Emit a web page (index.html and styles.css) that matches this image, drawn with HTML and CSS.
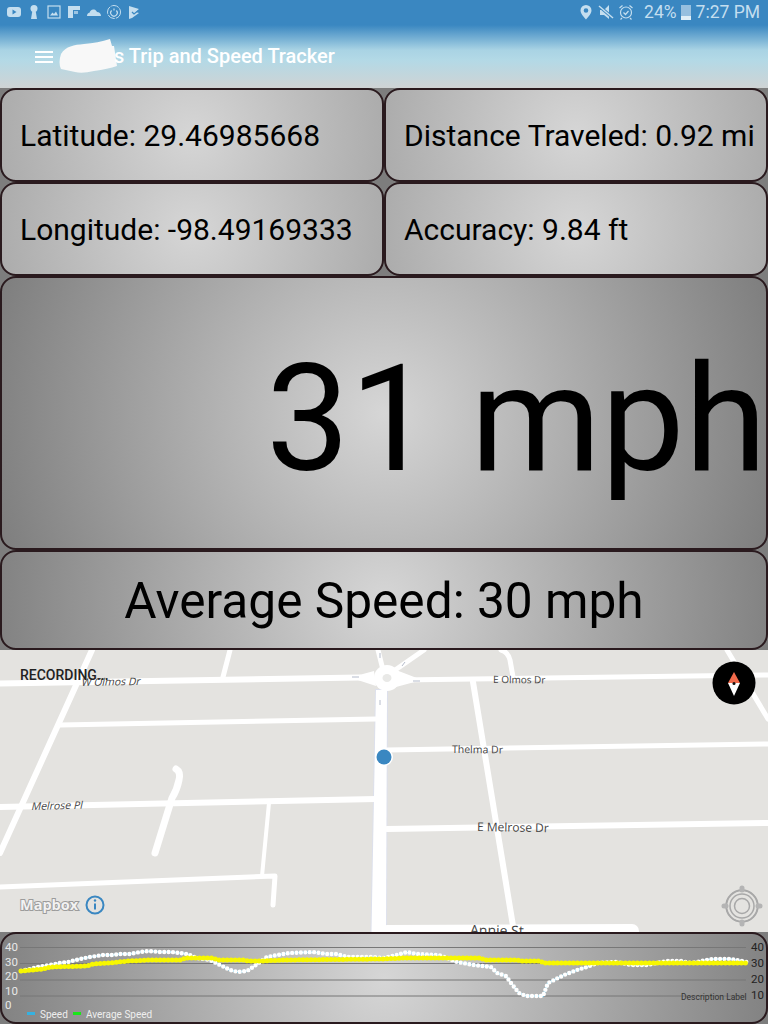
FILE: index.html
```html
<!DOCTYPE html>
<html lang="en">
<head>
  <meta charset="UTF-8" />
  <meta name="viewport" content="width=device-width, initial-scale=1" />
  <title>Trip and Speed Tracker</title>
  <link rel="stylesheet" href="styles.css">
</head>
<body>
  <header class="top">
    <div class="status-bar">
      <div class="status-icons">
        <svg viewBox="0 0 16 16"><rect x="1" y="3" width="14" height="10" rx="3" fill="currentColor"/><path d="M6.500 5.500v5l4-2.500z" fill="#3a87c1"/></svg>
        <svg viewBox="0 0 16 16"><circle cx="8" cy="4.500" r="3.500" fill="currentColor"/><path d="M6.500 6h3l1.500 9H5z" fill="currentColor"/></svg>
        <svg viewBox="0 0 16 16"><rect x="2" y="2" width="12" height="12" fill="none" stroke="currentColor" stroke-width="1.200"/><path d="M4 11.500l2.500-3 1.500 1.500 2-2.500 2 4z" fill="currentColor"/></svg>
        <svg viewBox="0 0 16 16"><path d="M2 2h12v4H7v8H2z" fill="currentColor"/><path d="M8 7h4v3H8z" fill="currentColor" opacity=".7"/></svg>
        <svg viewBox="0 0 16 16"><path d="M1 12c0-2 1-3 2.500-3.200C4 6.500 6 5 8 5.500c1.500.3 2.500 1.300 3 2.500 2 0 4 1.500 4 4z" fill="currentColor"/></svg>
        <svg viewBox="0 0 16 16"><circle cx="8" cy="8" r="6.500" fill="none" stroke="currentColor" stroke-width="1" stroke-dasharray="8 1"/><path d="M8 4.500v2M5.600 6.500a3.300 3.300 0 1 0 4.800 0" fill="none" stroke="currentColor" stroke-width="1.200"/></svg>
        <svg viewBox="0 0 16 16"><path d="M3 2l10 3-3 3 3 1-7 5-3 1z" fill="currentColor"/><path d="M6 8l2 2 5-4" fill="none" stroke="#3a87c1" stroke-width="1.300"/></svg>
      </div>
      <div class="status-right">
        <svg class="status-glyph" viewBox="0 0 16 16"><path fill-rule="evenodd" d="M8 1a5.500 5.500 0 0 0-5.500 5.500C2.500 10 8 15.500 8 15.500S13.500 10 13.500 6.500A5.500 5.500 0 0 0 8 1zm0 3.200a2.300 2.300 0 1 1 0 4.600 2.300 2.300 0 0 1 0-4.600z" fill="currentColor"/></svg>
        <svg class="status-glyph" viewBox="0 0 16 16"><path d="M11 1v14L6 11H2V6h4z" fill="currentColor"/><path d="M1 2l14 12" stroke="#3a87c1" stroke-width="3"/><path d="M1 2l14 12" stroke="currentColor" stroke-width="1.500"/></svg>
        <svg class="status-glyph" viewBox="0 0 16 16"><circle cx="8" cy="8.500" r="5.500" fill="none" stroke="currentColor" stroke-width="1.200"/><path d="M5.500 8.500l2 2 3-3.500M1.500 4l3-2.500M14.500 4l-3-2.500M4 14l-1.500 1.500M12 14l1.500 1.500" fill="none" stroke="currentColor" stroke-width="1.200"/></svg>
        <span class="status-percent">24%</span>
        <span class="battery"></span>
        <span class="status-time">7:27 PM</span>
      </div>
    </div>
    <div class="title-bar">
      <span class="menu-icon"><i></i><i></i><i></i></span>
      <svg class="blur-patch" viewBox="0 0 62 36"><path d="M3 15C8 7 16 6 26 5Q40 4 52 0l2 7 2 0 3 20Q50 30 36 32Q24 35 17 33L3 30Q0 24 3 15z" fill="#f8f8f8"/></svg>
      <span class="title">s Trip and Speed Tracker</span>
    </div>
  </header>

  <main class="readings">
    <div class="card">Latitude: 29.46985668</div>
    <div class="card">Distance Traveled: 0.92 mi</div>
    <div class="card">Longitude: -98.49169333</div>
    <div class="card">Accuracy: 9.84 ft</div>
    <div class="card card-speed">31 mph</div>
    <div class="card card-average">Average Speed: 30 mph</div>
  </main>

  <section class="map">
    <svg class="map-canvas" viewBox="0 0 768 282">
      <!-- calles -->
      <path class="main-road-edge" d="M376 40L371.500 282H386L387 40z"/>
      <g class="roads">
        <path d="M0 33.500L360 27.500" stroke-width="6"/>
        <path d="M92 0L0 203" stroke-width="6"/>
        <path d="M230 0L223 27" stroke-width="5"/>
        <path d="M60 75L376 69" stroke-width="5"/>
        <path d="M0 157L376 149" stroke-width="6"/>
        <path d="M176 119Q181 122 179 130Q177 140 172 148L155 203" stroke-width="7"/>
        <path d="M269 153L262 226" stroke-width="4"/>
        <path d="M0 237L275 226L273 255" stroke-width="5"/>
        <path d="M378 0L385 28M424 0L388 25" stroke-width="5"/>
        <path d="M400 30L768 25" stroke-width="5"/>
        <path d="M501 0Q508 2 510 10L513 27" stroke-width="5"/>
        <path d="M727 0L768 69" stroke-width="5"/>
        <path d="M473 32L514 282" stroke-width="6"/>
        <path d="M387 100L768 94" stroke-width="5"/>
        <path d="M387 179L768 173" stroke-width="6"/>
        <path d="M387 282L632 281" stroke-width="14"/>
      </g>
      <path class="main-road" d="M376 40L371.500 282H386L387 40z"/>
      <path class="main-road" d="M350 27.500L374 21 376 36zM422 30L396 20 396 37z"/>
      <circle cx="387" cy="28" r="13" fill="#fff"/>
      <ellipse cx="387" cy="28" rx="4.500" ry="4" fill="#e9e9e7"/>
      <g class="arrows">
        <path d="M352 27h7M380 3v5M380 50v5M420 31h-7M405 12l-3 4"/>
      </g>

      <!-- nombres de calles -->
      <text class="street" transform="translate(81 36) rotate(-1) skewX(-14)">W Olmos Dr</text>
      <text class="street" transform="translate(31 160) rotate(-1.500) skewX(-14)">Melrose Pl</text>
      <text class="street street-small" transform="translate(493 33) rotate(.5)">E Olmos Dr</text>
      <text class="street" transform="translate(452 103) rotate(.5)">Thelma Dr</text>
      <text class="street street-mid" transform="translate(477 181) rotate(1)">E Melrose Dr</text>
      <text class="street street-big" transform="translate(470 285) rotate(1)">Annie St</text>

      <!-- posicion actual -->
      <circle cx="384" cy="107" r="9" fill="#fff"/>
      <circle cx="384" cy="107" r="7.500" fill="#3a87c1"/>

      <!-- logo -->
      <text class="mapbox-logo" x="20" y="260">Mapbox</text>
      <circle cx="95" cy="255" r="8.500" fill="none" stroke="#3a87c1" stroke-width="2"/>
      <path d="M95 253.500v6" stroke="#3a87c1" stroke-width="2"/>
      <circle cx="95" cy="250.500" r="1.200" fill="#3a87c1"/>

      <!-- brujula -->
      <circle cx="734" cy="33" r="21.500" fill="#000"/>
      <path d="M734 22l-6 11h12z" fill="#f26a4b"/>
      <path d="M734 46l-6-13h12z" fill="#fff"/>
      <circle cx="734" cy="33.500" r="1.500" fill="#111"/>

      <!-- boton de ubicacion -->
      <g class="locate">
        <circle cx="742" cy="256" r="16" fill="#e4e3e0"/>
        <circle cx="742" cy="256" r="15.500"/>
        <circle cx="742" cy="256" r="12"/>
        <circle cx="742" cy="256" r="7.500" fill="#f6f6f6" stroke="none"/>
        <path class="locate-ticks" d="M742 238v2M742 272v2M724 256h2M758 256h2"/>
      </g>
    </svg>
    <span class="recording">RECORDING...</span>
  </section>

  <section class="card card-chart">
    <svg class="chart" viewBox="0 0 768 92">
      <g class="grid-lines">
        <path d="M20 15.500H746M20 31.500H746M20 48H746M20 64H746"/>
      </g>
      <g class="axis-left">
        <text x="5" y="19">40</text>
        <text x="5" y="34">30</text>
        <text x="5" y="48">20</text>
        <text x="5" y="63">10</text>
        <text x="5" y="77">0</text>
      </g>
      <g class="axis-right">
        <text x="751" y="19">40</text>
        <text x="751" y="35">30</text>
        <text x="751" y="51">20</text>
        <text x="751" y="67">10</text>
      </g>
      <polyline class="line-speed" points="21,39 30,37 38,35 50,33 60,31 68,30 80,27 90,25 103,23 113,23 120,22 130,22 140,20 149,19 160,20 172,20 187,22 197,26 210,28 220,33 230,38 238,40 247,39 253,35 267,25 283,22 290,21 313,20 327,22 337,22 347,25 373,25 384,26 397,23 407,20 417,22 439,23 447,26 457,30 474,33 491,35 497,41 506,44 511,51 519,61 526,64 543,64 548,51 556,47 564,43 577,38 587,35 597,31 617,30 631,33 647,33 667,29 681,29 691,31 712,27 731,27 747,30"/>
      <polyline class="dots-speed" points="21,39 30,37 38,35 50,33 60,31 68,30 80,27 90,25 103,23 113,23 120,22 130,22 140,20 149,19 160,20 172,20 187,22 197,26 210,28 220,33 230,38 238,40 247,39 253,35 267,25 283,22 290,21 313,20 327,22 337,22 347,25 373,25 384,26 397,23 407,20 417,22 439,23 447,26 457,30 474,33 491,35 497,41 506,44 511,51 519,61 526,64 543,64 548,51 556,47 564,43 577,38 587,35 597,31 617,30 631,33 647,33 667,29 681,29 691,31 712,27 731,27 747,30"/>
      <polyline class="line-average" points="21,39 43,37 50,35 87,34 93,32 110,31 128,29 150,28 182,28 185,26 213,26 218,28 243,28 248,29 263,29 283,28 383,27 404,26 481,26 484,28 517,28 521,29 541,29 543,31 747,31"/>
      <text class="chart-note" x="681" y="68">Description Label</text>
      <rect x="27" y="80" width="8" height="3" fill="#35b1e0"/>
      <text class="chart-legend" x="40" y="86">Speed</text>
      <rect x="73" y="80" width="8" height="3" fill="#19e619"/>
      <text class="chart-legend" x="86" y="86">Average Speed</text>
    </svg>
  </section>
</body>
</html>
```

FILE: styles.css
```css
* {
  box-sizing: border-box;
}
body {
  margin: 0;
  width: 768px;
  height: 1024px;
  overflow: hidden;
  background: #7d7d7d;
  font-family: Roboto, "Liberation Sans", sans-serif;
  display: flex;
  flex-direction: column;
}

/* Barra superior */
.top {
  height: 88px;
  background: linear-gradient(#3a87c1 0, #3a87c1 25px, #a9d3e4 50px, #b3d9e6 60px, #cfd3d4 88px);
  color: #fff;
}
.status-bar {
  height: 24px;
  display: flex;
  justify-content: space-between;
  align-items: center;
  padding: 0 8px 0 6px;
  color: #c4deef;
}
.status-icons {
  display: flex;
  gap: 4px;
}
.status-icons svg {
  width: 16px;
  height: 16px;
}
.status-right {
  display: flex;
  align-items: center;
  font-size: 17.500px;
}
.status-glyph {
  width: 16px;
  height: 16px;
  margin-right: 4px;
}
.status-percent {
  margin-left: 6px;
}
.battery {
  width: 10px;
  height: 15px;
  margin: 0 5px 0 4px;
  background: linear-gradient(#96bfdf 0, #96bfdf 70%, #dfeef7 70%);
  border-top: 1px solid #96bfdf;
}
.title-bar {
  height: 64px;
  display: flex;
  align-items: center;
  padding: 0 0 0 35px;
}
.menu-icon {
  width: 18px;
  display: flex;
  flex-direction: column;
  gap: 3px;
  margin-top: 1px;
}
.menu-icon i {
  height: 2px;
  background: #fff;
}
.blur-patch {
  width: 62px;
  height: 36px;
  margin-left: 5px;
  margin-top: 1px;
}
.title {
  margin-left: -6px;
  font-size: 20px;
  font-weight: 500;
  white-space: nowrap;
}

/* Tarjetas */
.readings {
  display: grid;
  grid-template-columns: 1fr 1fr;
  grid-template-rows: 94px 94px 274px 100px;
}
.card {
  border: 2px solid #2a1a1e;
  border-radius: 16px;
  background: radial-gradient(circle 410px at center, #d6d6d6 0, #7d7d7d 100%);
  color: #000;
  font-size: 30px;
  display: flex;
  align-items: center;
  padding-left: 18px;
  white-space: nowrap;
  overflow: hidden;
}
.card-speed {
  grid-column: 1 / 3;
  padding: 12px 0 0 264px;
  font-size: 149px;
}
.card-average {
  grid-column: 1 / 3;
  justify-content: center;
  padding: 2px 0 0 0;
  font-size: 49.600px;
}

/* Mapa */
.map {
  position: relative;
  height: 282px;
  background: #e4e3e0;
}
.map-canvas {
  display: block;
  width: 768px;
  height: 282px;
}
.roads path {
  fill: none;
  stroke: #fff;
  stroke-linecap: round;
  stroke-linejoin: round;
}
.main-road-edge {
  fill: none;
  stroke: #dde0ec;
  stroke-width: 2;
}
.main-road {
  fill: #fff;
}
.arrows path {
  fill: none;
  stroke: #b5bccb;
  stroke-width: 1;
}
.street {
  font-family: "Open Sans", Roboto, sans-serif;
  font-size: 10.500px;
  fill: #444;
}
.street-small {
  font-size: 10px;
}
.street-mid {
  font-size: 12px;
}
.street-big {
  font-size: 14px;
}
.mapbox-logo {
  font-family: "Open Sans", sans-serif;
  font-size: 14.500px;
  font-weight: 700;
  fill: #f2f2f2;
  stroke: #9c9c9c;
  stroke-width: 2;
  paint-order: stroke;
}
.locate circle {
  fill: none;
  stroke: #a8a8a8;
  stroke-width: 1.500;
}
.locate-ticks {
  fill: none;
  stroke: #b4b4b4;
  stroke-width: 5;
  stroke-linecap: round;
}
.recording {
  position: absolute;
  left: 20px;
  top: 17px;
  font-size: 14px;
  font-weight: 500;
  color: #222;
}

/* Grafica */
.card-chart {
  height: 92px;
  padding: 0;
  display: block;
  margin-top: 0;
}
.chart {
  display: block;
  width: 768px;
  height: 92px;
  margin: -2px;
}
.grid-lines path {
  fill: none;
  stroke: #777;
  stroke-width: 1;
}
.axis-left text {
  font-size: 11.500px;
  fill: #e8e8e8;
}
.axis-right text {
  font-size: 11.500px;
  fill: #222;
}
.line-speed {
  fill: none;
  stroke: #35b1e0;
  stroke-width: 2;
}
.dots-speed {
  fill: none;
  stroke: #fff;
  stroke-width: 4.400;
  stroke-linecap: round;
  stroke-dasharray: 0 4.400;
}
.line-average {
  fill: none;
  stroke: #f7f700;
  stroke-width: 5;
  stroke-linecap: round;
  stroke-dasharray: 0 4;
}
.chart-note {
  font-size: 8.500px;
  fill: #333;
}
.chart-legend {
  font-size: 10px;
  fill: #eee;
}
```
